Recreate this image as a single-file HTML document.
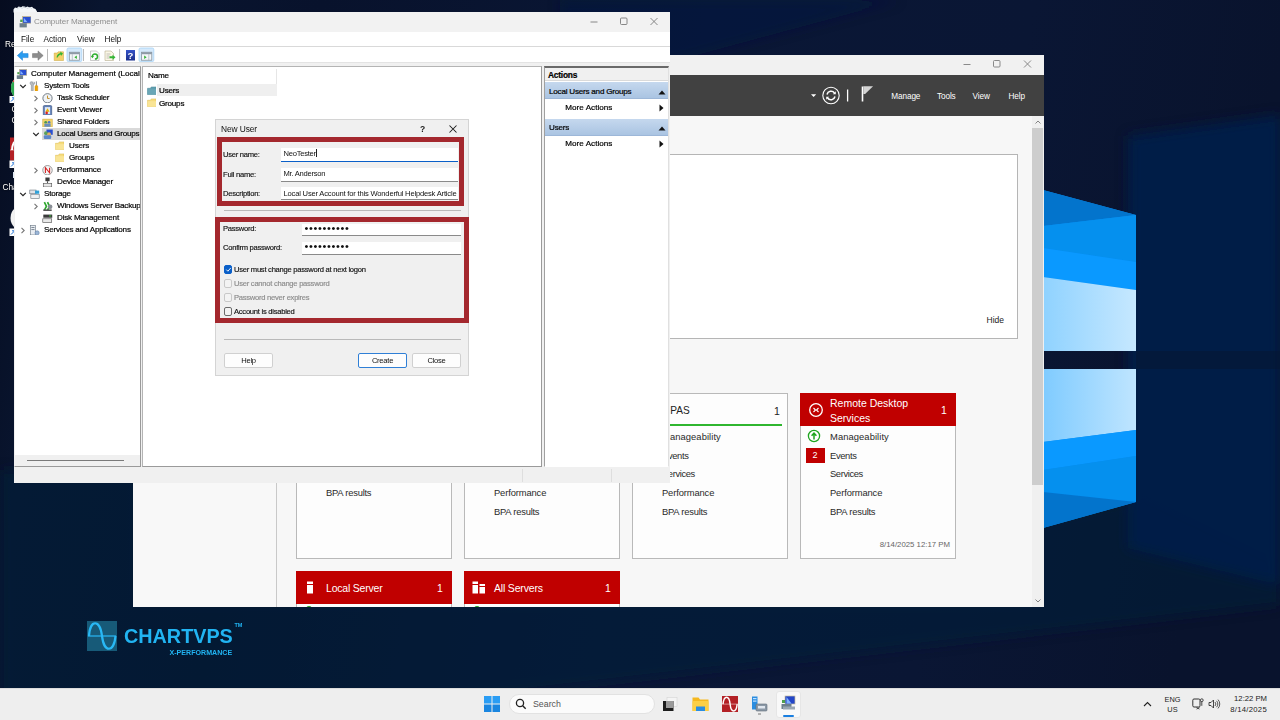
<!DOCTYPE html>
<html lang="en">
<head>
<meta charset="utf-8">
<title>Computer Management - New User</title>
<style>
*{box-sizing:border-box;margin:0;padding:0}
html,body{width:1280px;height:720px;overflow:hidden;background:#081229}
body{font-family:"Liberation Sans","DejaVu Sans",sans-serif;font-size:8.6px;color:#111;position:relative}
.abs{position:absolute}
#desk{position:absolute;left:0;top:0;width:1280px;height:720px;overflow:hidden}
.t{position:absolute;white-space:nowrap;line-height:12px}
/* ---------- Server Manager ---------- */
#sm{position:absolute;left:133px;top:55px;width:911px;height:552px;background:#f7f7f7;overflow:hidden}
#sm .title{position:absolute;left:0;top:0;width:911px;height:20px;background:#f1f1f1}
#sm .bar{position:absolute;left:0;top:20px;width:911px;height:41px;background:#414141}
#sm .bar .m{position:absolute;top:15.800px;color:#fff;font-size:8.200px;letter-spacing:-0.100px;line-height:12px}
#sm .nav{position:absolute;left:0;top:61px;width:144px;height:491px;background:#f8f8f8;border-right:1px solid #c9c9c9}
.tile{position:absolute;width:156px;background:#fdfdfd;border:1px solid #b9b9b9}
.tile .hd{position:absolute;left:-1px;top:-1px;width:156px;height:33px;background:#c00000;color:#fff}
.tile .row{position:absolute;left:34px;font-size:9.4px;line-height:12px;color:#2a2a2a;white-space:nowrap}
/* ---------- Computer Management ---------- */
#cm{position:absolute;left:14px;top:12px;width:656px;height:471px;background:#f0f0f0;overflow:hidden}
#cm .title{position:absolute;left:0;top:0;width:656px;height:20px;background:#f2f2f2}
#cm .menu{position:absolute;left:0;top:20px;width:656px;height:14px;background:#fff}
#cm .tool{position:absolute;left:0;top:35px;width:656px;height:15px;background:#fff}
.pane{position:absolute;background:#fff;border:1px solid #828790}
.tr{position:absolute;white-space:nowrap;line-height:12px;font-size:8.1px;letter-spacing:-0.22px;color:#000;-webkit-text-stroke:0.2px #000}
/* ---------- Dialog ---------- */
#dlg{position:absolute;left:215px;top:119px;width:254px;height:257px;background:#f0f0f0;border:1px solid #d4d4d4}
#dlg .lb{position:absolute;white-space:nowrap;font-size:7.6px;line-height:11px;color:#111;letter-spacing:-0.26px;-webkit-text-stroke:0.15px currentColor}
.fld{position:absolute;background:#fff;border-bottom:1px solid #8a8a8a;font-size:7.6px;line-height:12px;padding-left:2.500px;white-space:nowrap;letter-spacing:-0.26px;overflow:hidden}
.red{position:absolute;border:5px solid #a4282e}
.btn{position:absolute;height:14px;background:#fdfdfd;border:1px solid #d0d0d0;border-radius:2px;text-align:center;font-size:7.6px;line-height:12px;letter-spacing:-0.26px}
.cb{position:absolute;width:8.500px;height:8.500px;border:1px solid #6b6b6b;border-radius:2px;background:#f3f3f3}
/* ---------- Taskbar ---------- */
#tb{position:absolute;left:0;top:688px;width:1280px;height:32px;background:#eeeeee}
</style>
</head>
<body>
<div id="desk">
<svg class="abs" style="left:0;top:0" width="1280" height="720" viewBox="0 0 1280 720">
<defs>
<linearGradient id="bg" x1="0" y1="0" x2="1" y2="0.100">
<stop offset="0" stop-color="#060c1f"/><stop offset="0.080" stop-color="#09152f"/><stop offset="0.250" stop-color="#08122c"/><stop offset="0.550" stop-color="#0a1736"/><stop offset="0.800" stop-color="#0a1634"/><stop offset="1" stop-color="#09132d"/>
</linearGradient>
<linearGradient id="lt" x1="0" y1="0" x2="1" y2="0"><stop offset="0" stop-color="#8fd2ff"/><stop offset="1" stop-color="#c6e8ff"/></linearGradient>
<linearGradient id="lt2" x1="0" y1="0" x2="1" y2="0"><stop offset="0" stop-color="#7fcbff"/><stop offset="1" stop-color="#bfe5ff"/></linearGradient>
<filter id="bl" x="-10%" y="-10%" width="120%" height="120%"><feGaussianBlur stdDeviation="6"/></filter>
</defs>
<rect width="1280" height="720" fill="url(#bg)"/>
<g filter="url(#bl)">
<polygon points="560,0 900,0 670,62 560,62" fill="#0b1b40" opacity="0.500"/>
<polygon points="0,470 140,470 140,600 1030,600 1030,520 1136,500 1280,570 1280,605 450,700 0,700" fill="#081d3c" opacity="0.550"/>
<polygon points="1128,136 1280,115 1280,585 1128,548" fill="#06204a" opacity="0.950"/>
</g>
<rect x="1136" y="351" width="144" height="18" fill="#051734" opacity="0.600"/>
<!-- upper pane -->
<polygon points="1043,190 1136,215 1136,351 1043,351" fill="#0a8cf0"/>
<polygon points="1043,190 1136,215 1043,226" fill="#0374cc"/>
<polygon points="1043,226 1136,215 1136,262 1043,248" fill="#0590ee"/>
<polygon points="1043,248 1136,262 1136,290 1043,277" fill="#0a99ff"/>
<polygon points="1043,277 1136,290 1136,351 1043,351" fill="url(#lt)"/>
<!-- lower pane -->
<polygon points="1043,369 1136,369 1136,502 1043,528" fill="#0a8cf0"/>
<polygon points="1043,369 1136,369 1136,430 1043,442" fill="url(#lt2)"/>
<polygon points="1043,442 1136,430 1136,456 1043,470" fill="#0a99ff"/>
<polygon points="1043,470 1136,456 1136,502 1043,492" fill="#0590ee"/>
<polygon points="1043,492 1136,502 1043,528" fill="#0374cc"/>
</svg>

<svg class="abs" style="left:0;top:0" width="60" height="250" viewBox="0 0 60 250">
 <path d="M13.500 12.500v-3l1.500-2 2 0.500 1.500-1.500 2.500 0.800 2-1.300 2 1.500 2.500-1 2 1 2.500-0.800 1.500 1.600 2 0.700 1.500 2.500v2z" fill="#f4f6f8"/>
 <path d="M17 9l3-2 2 1.500 3-2 2 2 3-1.200 2 1.500" fill="none" stroke="#c9d2da" stroke-width="0.700"/>
 <!-- chrome -->
 <circle cx="24" cy="88" r="13" fill="#e8eaed"/>
 <path d="M24 88L12.700 81.500A13 13 0 0 0 17.500 99.300z" fill="#2da94f"/>
 <path d="M24 88L12.700 81.500A13 13 0 0 1 24 75z" fill="#e33b2e"/>
 <rect x="9.500" y="96" width="7" height="7" fill="#fff"/><path d="M11 101.500l3.500-3.500M12 97.800h2.700v2.700" stroke="#1a6fd6" stroke-width="1" fill="none"/>
 <!-- chart app -->
 <rect x="10" y="137.500" width="24" height="23" fill="#b32025"/>
 <path d="M10 150h24" stroke="#e9b9ba" stroke-width="0.800"/>
 <path d="M12 150C13 138 20 138 22 150" fill="none" stroke="#fff" stroke-width="2"/>
 <rect x="9.500" y="160.500" width="7" height="7.500" fill="#fff"/><path d="M11 166.500l3.500-3.500M12 162.800h2.700v2.700" stroke="#1a6fd6" stroke-width="1" fill="none"/>
 <!-- white round app -->
 <circle cx="24" cy="218" r="13.500" fill="#f2f2f2"/>
 <rect x="9.500" y="228.500" width="7" height="7.500" fill="#fff"/><path d="M11 234.500l3.500-3.500M12 230.800h2.700v2.700" stroke="#1a6fd6" stroke-width="1" fill="none"/>
</svg>
<span class="t" style="left:5px;top:37.500px;font-size:8.300px;color:#fff;text-shadow:0 0 2px #000">Recycle Bin</span>
<span class="t" style="left:11.500px;top:103px;font-size:8.300px;color:#fff;text-shadow:0 0 2px #000">Google</span>
<span class="t" style="left:11.500px;top:114px;font-size:8.300px;color:#fff;text-shadow:0 0 2px #000">Chrome</span>
<div class="abs" style="left:12.500px;top:172px;width:1.500px;height:5.500px;background:#dfe9f5"></div>
<span class="t" style="left:2.500px;top:180.500px;font-size:8.300px;color:#fff;text-shadow:0 0 2px #000">ChartVPS</span>


<div id="sm">
 <div class="title">
  <svg class="abs" style="left:830px;top:3px" width="72" height="12" viewBox="0 0 72 12"><g stroke="#8a8a8a" stroke-width="1" fill="none"><path d="M0.5 6.5h7"/><rect x="30.5" y="2.5" width="6.5" height="6.5" rx="1"/><path d="M61 2.5l7 7M68 2.5l-7 7"/></g></svg>
 </div>
 <div class="bar">
  <svg class="abs" style="left:676px;top:8px" width="80" height="26" viewBox="0 0 80 26">
   <path d="M2 11.300h5.200l-2.600 2.800z" fill="#fff"/>
   <circle cx="22" cy="12.5" r="8.2" fill="none" stroke="#fff" stroke-width="1.1"/>
   <path d="M18 11.5a4.2 4.2 0 0 1 7.5-1.5M26 13.500a4.200 4.200 0 0 1 -7.5 1.500" fill="none" stroke="#fff" stroke-width="1.5"/>
   <path d="M26.800 8.300v3h-3zM17.200 16.700v-3h3z" fill="#fff"/>
   <path d="M38.600 6.500v12" stroke="#fff" stroke-width="1.300"/>
   <path d="M53.500 3.500v15" stroke="#fff" stroke-width="1.600"/>
   <path d="M54.300 3.300h9.800l-8 7.800h-1.800z" fill="#d4d4d4"/>
  </svg>
  <span class="m" style="left:758.300px">Manage</span>
  <span class="m" style="left:804px">Tools</span>
  <span class="m" style="left:839.500px">View</span>
  <span class="m" style="left:875.400px">Help</span>
 </div>
 <div class="nav"></div>
 <!-- welcome panel -->
 <div class="abs" style="left:163px;top:99px;width:722px;height:185px;background:#fff;border:1px solid #b5b5b5"></div>
 <span class="t" style="left:853.500px;top:259px;font-size:8.500px;color:#222">Hide</span>
 <!-- scrollbar -->
 <div class="abs" style="left:899px;top:61px;width:12px;height:491px;background:#f0f0f0"></div>
 <div class="abs" style="left:899px;top:73px;width:10.500px;height:357px;background:#cdcdcd"></div>
 <svg class="abs" style="left:902px;top:65px" width="6" height="4" viewBox="0 0 6 4"><path d="M0.500 3.500l2.500-2.500 2.500 2.500" fill="none" stroke="#777" stroke-width="0.900"/></svg>
 <svg class="abs" style="left:902px;top:544px" width="6" height="4" viewBox="0 0 6 4"><path d="M0.500 0.500l2.500 2.500 2.500-2.500" fill="none" stroke="#777" stroke-width="0.900"/></svg>
 <!-- tiles row 1 -->
 <div class="tile" style="left:163px;top:338px;height:166px">
  <span class="row" style="left:29px;top:92.6px;letter-spacing:-0.22px">BPA results</span>
 </div>
 <div class="tile" style="left:331px;top:338px;height:166px">
  <span class="row" style="left:29px;top:92.6px;letter-spacing:-0.13px">Performance</span>
  <span class="row" style="left:29px;top:111.6px;letter-spacing:-0.22px">BPA results</span>
 </div>
 <div class="tile" style="left:499px;top:338px;height:166px">
  <span class="abs" style="left:30px;top:10.500px;font-size:10.100px;line-height:12px;color:#222">NPAS</span>
  <span class="abs" style="left:141px;top:11px;font-size:10.500px;line-height:12px;color:#222">1</span>
  <div class="abs" style="left:10px;top:30px;width:139px;height:2px;background:#2fb62f"></div>
  <span class="row" style="left:29px;top:36.6px;letter-spacing:0.08px">Manageability</span>
  <span class="row" style="left:29px;top:55.6px;letter-spacing:-0.35px">Events</span>
  <span class="row" style="left:29px;top:73.6px;letter-spacing:-0.39px">Services</span>
  <span class="row" style="left:29px;top:92.6px;letter-spacing:-0.13px">Performance</span>
  <span class="row" style="left:29px;top:111.6px;letter-spacing:-0.22px">BPA results</span>
 </div>
 <div class="tile" style="left:667px;top:338px;height:166px">
  <div class="hd">
   <svg class="abs" style="left:8px;top:9px" width="16" height="16" viewBox="0 0 16 16"><circle cx="8" cy="8" r="6.300" fill="none" stroke="#fff" stroke-width="1.300"/><path d="M5.500 6l2 2-2 2M10.500 6l-2 2 2 2" fill="none" stroke="#fff" stroke-width="1.100"/></svg>
   <span class="abs" style="left:30px;top:3px;font-size:10.500px;line-height:14.500px;white-space:nowrap">Remote Desktop<br>Services</span>
   <span class="abs" style="left:141px;top:10px;font-size:10.500px;line-height:14px">1</span>
  </div>
  <svg class="abs" style="left:6px;top:35px" width="14" height="14" viewBox="0 0 14 14"><circle cx="7" cy="7" r="5.600" fill="#fff" stroke="#1ea51e" stroke-width="1.300"/><path d="M7 10.500v-5M4.600 6.800l2.400-2.600 2.400 2.600" fill="none" stroke="#1ea51e" stroke-width="1.500"/></svg>
  <span class="row" style="left:29px;top:36.6px;letter-spacing:0.08px">Manageability</span>
  <div class="abs" style="left:4.500px;top:53.500px;width:19px;height:15.500px;background:#c00000;color:#fff;font-size:9px;line-height:15.500px;text-align:center">2</div>
  <span class="row" style="left:29px;top:55.6px;letter-spacing:-0.35px">Events</span>
  <span class="row" style="left:29px;top:73.6px;letter-spacing:-0.39px">Services</span>
  <span class="row" style="left:29px;top:92.6px;letter-spacing:-0.13px">Performance</span>
  <span class="row" style="left:29px;top:111.6px;letter-spacing:-0.22px">BPA results</span>
  <span class="abs" style="right:5px;top:146px;font-size:7.800px;line-height:10px;color:#666;white-space:nowrap">8/14/2025 12:17 PM</span>
 </div>
 <!-- tiles row 2 -->
 <div class="tile" style="left:163px;top:515.700px;height:60px">
  <div class="hd" style="height:33px">
   <svg class="abs" style="left:10px;top:10px" width="8" height="13" viewBox="0 0 8 13"><rect x="1" y="0.500" width="6" height="2.500" fill="#fff"/><rect x="1" y="4" width="6" height="8.500" fill="#fff"/></svg>
   <span class="abs" style="left:30px;top:10px;font-size:10.500px;line-height:14px;letter-spacing:-0.200px;white-space:nowrap">Local Server</span>
   <span class="abs" style="left:141px;top:10px;font-size:10.500px;line-height:14px">1</span>
  </div>
  <div class="abs" style="left:9px;top:34.300px;width:6px;height:6px;border-radius:3px;background:#1ea51e"></div>
 </div>
 <div class="tile" style="left:331px;top:515.700px;height:60px">
  <div class="hd" style="height:33px">
   <svg class="abs" style="left:8px;top:10px" width="14" height="13" viewBox="0 0 14 13"><rect x="0.500" y="0.500" width="5.500" height="2.500" fill="#fff"/><rect x="0.500" y="4" width="5.500" height="8.500" fill="#fff"/><rect x="7.500" y="3" width="5.500" height="2" fill="#fff"/><rect x="7.500" y="6" width="5.500" height="6.500" fill="#fff"/></svg>
   <span class="abs" style="left:30px;top:10px;font-size:10.500px;line-height:14px;letter-spacing:-0.180px;white-space:nowrap">All Servers</span>
   <span class="abs" style="left:141px;top:10px;font-size:10.500px;line-height:14px">1</span>
  </div>
  <div class="abs" style="left:9px;top:34.300px;width:6px;height:6px;border-radius:3px;background:#1ea51e"></div>
 </div>
</div>

<div id="cm">
 <div class="title">
  <svg class="abs" style="left:5px;top:4px" width="12" height="12" viewBox="0 0 10 10"><rect x="3" y="0.500" width="7" height="5.500" fill="#2a4fd0" stroke="#c8b98a" stroke-width="0.600"/><path d="M4 1.500l3 3.500h-3z" fill="#7fb0ff"/><rect x="0.500" y="6" width="6" height="3.500" fill="#6d7f8c"/><rect x="1" y="3" width="2" height="2" fill="#4ea04e"/></svg>
  <span class="t" style="left:20px;top:4px;font-size:8.100px;letter-spacing:-0.100px;color:#8f8f8f">Computer Management</span>
  <svg class="abs" style="left:576px;top:5px" width="72" height="10" viewBox="0 0 72 10"><g stroke="#7a7a7a" stroke-width="0.900" fill="none"><path d="M0.500 5h7"/><rect x="30.500" y="1" width="6.500" height="6.500" rx="1"/><path d="M60.500 1l7 7M67.500 1l-7 7"/></g></svg>
 </div>
 <div class="menu">
  <span class="t" style="left:7px;top:2px;font-size:8.200px">File</span>
  <span class="t" style="left:29.500px;top:2px;font-size:8.200px">Action</span>
  <span class="t" style="left:63px;top:2px;font-size:8.200px">View</span>
  <span class="t" style="left:90.500px;top:2px;font-size:8.200px">Help</span>
 </div>
 <div class="abs" style="left:0;top:34px;width:656px;height:1px;background:#d9d9d9"></div>
 <div class="tool">
  <svg class="abs" style="left:0;top:0" width="160" height="15" viewBox="14 47 160 15">
   <defs><linearGradient id="hb" x1="0" y1="0" x2="0" y2="1"><stop offset="0" stop-color="#3553c8"/><stop offset="1" stop-color="#1a2f8c"/></linearGradient></defs>
   <path d="M17.300 55.600l5.200-4.700v2.700h5.600v4h-5.600v2.700z" fill="#2a9cf0" stroke="#1f7fd0" stroke-width="0.500"/>
   <path d="M43.200 55.600l-5.200-4.700v2.700h-5.500v4h5.500v2.700z" fill="#8d8d8d" stroke="#707070" stroke-width="0.500"/>
   <path d="M47.500 49v12" stroke="#a8a8a8" stroke-width="0.800"/>
   <path d="M54.200 53h3l1-1.200h5.300v8.700h-9.300z" fill="#f3d06a" stroke="#c9a43c" stroke-width="0.500"/>
   <path d="M56.500 57.500c0.500-3 2-4 4-4.500l-0.500-1.500 3 2-2 2.500-0.300-1.500c-1.500 0.500-2.500 1.500-3 3z" fill="#35b535"/>
   <rect x="67" y="48" width="14.800" height="13.600" rx="1.500" fill="#d5e9fb" stroke="#9fd0f7" stroke-width="0.700"/>
   <rect x="69.300" y="52.200" width="10.200" height="8" fill="#f4f6f8" stroke="#7d8a96" stroke-width="0.700"/>
   <rect x="69.300" y="52.200" width="10.200" height="2" fill="#8e9aa6"/>
   <path d="M72.300 54.200v6" stroke="#9aa5b0" stroke-width="0.600"/>
   <path d="M76.800 55.500v3.600l-2.400-1.800z" fill="#2fae2f"/>
   <path d="M83.500 49v12" stroke="#a8a8a8" stroke-width="0.800"/>
   <path d="M90.500 51h6l2.500 2.500v7h-8.500z" fill="#fbfbfb" stroke="#a9a9a9" stroke-width="0.600"/>
   <path d="M92.300 56.500a2.600 2.600 0 1 1 2.600 2.600" fill="none" stroke="#2fae2f" stroke-width="1.500"/>
   <path d="M90.800 56l1.600 2.200 1.600-2.200z" fill="#2fae2f"/>
   <path d="M105 51h6l2.500 2.500v7h-8.500z" fill="#fbf7e6" stroke="#b5ac8d" stroke-width="0.600"/>
   <path d="M106.500 54h4M106.500 56h3M106.500 58h3" stroke="#9c9c9c" stroke-width="0.600"/>
   <path d="M109.500 56.300h3v-1.600l3 2.600-3 2.600v-1.600h-3z" fill="#35b535"/>
   <path d="M119.600 49v12" stroke="#a8a8a8" stroke-width="0.800"/>
   <rect x="126" y="50" width="9" height="10.500" fill="url(#hb)"/>
   <text x="130.500" y="58.700" font-family="Liberation Sans, sans-serif" font-size="9.500" font-weight="bold" fill="#fff" text-anchor="middle">?</text>
   <rect x="139" y="48" width="14.800" height="13.600" rx="1.500" fill="#d5e9fb" stroke="#9fd0f7" stroke-width="0.700"/>
   <rect x="141.600" y="52.200" width="10.200" height="8" fill="#f4f6f8" stroke="#7d8a96" stroke-width="0.700"/>
   <rect x="141.600" y="52.200" width="10.200" height="2" fill="#8e9aa6"/>
   <path d="M148.800 54.200v6" stroke="#9aa5b0" stroke-width="0.600"/>
   <path d="M144.200 55.500v3.600l2.400-1.800z" fill="#2fae2f"/>
  </svg>

 </div>
 <div class="abs" style="left:0;top:50px;width:656px;height:1px;background:#e3e3e3"></div>
 <!-- tree pane -->
 <div class="pane" style="left:0px;top:54px;width:127px;height:401px;border-color:#b4b4b4 #9a9a9a #9a9a9a #f0f0f0"></div>
 <div id="tree" class="abs" style="left:0;top:55px;width:126px;height:399px;overflow:hidden"><div class="abs" style="left:0;top:-55px">
  <svg class="abs" style="left:2.3px;top:56.9px" width="11" height="10.500" viewBox="0 0 10 10"><rect x="3" y="0.500" width="7" height="5.500" fill="#2a4fd0" stroke="#c8b98a" stroke-width="0.600"/><path d="M4 1.500l3 3.500h-3z" fill="#7fb0ff"/><rect x="0.500" y="6" width="6" height="3.500" fill="#6d7f8c"/><rect x="1" y="3" width="2" height="2" fill="#4ea04e"/></svg>
  <span class="tr" style="left:17.0px;top:55.9px;letter-spacing:-0.020px">Computer Management (Local</span>
  <svg class="abs" style="left:4.5px;top:71.9px" width="8" height="6" viewBox="0 0 8 6"><path d="M1.200 0.900l2.800 2.800 2.800-2.800" fill="none" stroke="#222" stroke-width="1.200"/></svg>
  <svg class="abs" style="left:15.3px;top:68.9px" width="11" height="10.500" viewBox="0 0 10 10"><path d="M1.300 0.800c-1 1.200-0.300 2.700 0.700 3v5.200c0 1 1.800 1 1.800 0v-5.200c1-0.300 1.700-1.800 0.700-3v1.700h-1.400v-1.700z" fill="#b9bec4" stroke="#7d848c" stroke-width="0.500"/><rect x="6.300" y="0.300" width="1" height="4.200" fill="#8a8f96"/><rect x="5.500" y="4.300" width="2.600" height="5.500" rx="1" fill="#f0a400" stroke="#c98200" stroke-width="0.400"/></svg>
  <span class="tr" style="left:30.0px;top:67.9px">System Tools</span>
  <svg class="abs" style="left:18.5px;top:82.9px" width="6" height="7" viewBox="0 0 6 7"><path d="M1.500 0.800l2.700 2.700-2.700 2.700" fill="none" stroke="#777" stroke-width="1.100"/></svg>
  <svg class="abs" style="left:28.3px;top:80.9px" width="11" height="10.500" viewBox="0 0 10 10"><circle cx="5" cy="5" r="4.400" fill="#eef2f6" stroke="#6c7680" stroke-width="0.900"/><path d="M5 2.500v2.700h2" stroke="#c08a20" stroke-width="0.900" fill="none"/></svg>
  <span class="tr" style="left:43.0px;top:79.9px">Task Scheduler</span>
  <svg class="abs" style="left:18.5px;top:94.9px" width="6" height="7" viewBox="0 0 6 7"><path d="M1.500 0.800l2.700 2.700-2.700 2.700" fill="none" stroke="#777" stroke-width="1.100"/></svg>
  <svg class="abs" style="left:28.3px;top:92.9px" width="11" height="10.500" viewBox="0 0 10 10"><rect x="1" y="0.500" width="8" height="9.500" rx="1" fill="#5f7fb8" stroke="#3d557f" stroke-width="0.600"/><rect x="2.500" y="2" width="5" height="6.500" fill="#dfe8f5"/><path d="M5 3l2 3.500h-4z" fill="#e8b400"/><circle cx="4.200" cy="7.500" r="1.200" fill="#d22"/></svg>
  <span class="tr" style="left:43.0px;top:91.9px">Event Viewer</span>
  <svg class="abs" style="left:18.5px;top:106.9px" width="6" height="7" viewBox="0 0 6 7"><path d="M1.500 0.800l2.700 2.700-2.700 2.700" fill="none" stroke="#777" stroke-width="1.100"/></svg>
  <svg class="abs" style="left:28.3px;top:104.9px" width="11" height="10.500" viewBox="0 0 10 10"><rect x="0.500" y="2" width="9" height="7.500" fill="#f2d36b" stroke="#c9a53a" stroke-width="0.500"/><circle cx="3.300" cy="5" r="1.300" fill="#4d9a4d"/><circle cx="6.500" cy="5" r="1.300" fill="#4d77c9"/><rect x="2" y="6.300" width="6" height="3" fill="#6a8fbf"/></svg>
  <span class="tr" style="left:43.0px;top:103.9px">Shared Folders</span>
  <div class="abs" style="left:28.0px;top:115.9px;width:97.5px;height:12px;background:#d9d9d9"></div>
  <svg class="abs" style="left:17.5px;top:119.9px" width="8" height="6" viewBox="0 0 8 6"><path d="M1.200 0.900l2.800 2.800 2.800-2.800" fill="none" stroke="#222" stroke-width="1.200"/></svg>
  <svg class="abs" style="left:28.3px;top:116.9px" width="11" height="10.500" viewBox="0 0 10 10"><rect x="4" y="0.500" width="6" height="5" fill="#2a4fd0"/><circle cx="3.500" cy="4" r="1.800" fill="#5aa05a"/><circle cx="6.500" cy="5" r="1.800" fill="#e0b060"/><rect x="1.500" y="6" width="7" height="3.500" rx="1" fill="#5d86c9"/></svg>
  <span class="tr" style="left:43.0px;top:115.9px">Local Users and Groups</span>
  <svg class="abs" style="left:40.8px;top:129.4px" width="9.500" height="9" viewBox="0 0 10 10" preserveAspectRatio="none"><path d="M0.500 2.500h3l1-1.500h5v8.500h-9z" fill="#f6dc7c" stroke="#d9b84e" stroke-width="0.500"/><rect x="0.500" y="3.500" width="9" height="6" fill="#f9e596"/></svg>
  <span class="tr" style="left:55.0px;top:127.9px">Users</span>
  <svg class="abs" style="left:40.8px;top:141.4px" width="9.500" height="9" viewBox="0 0 10 10" preserveAspectRatio="none"><path d="M0.500 2.500h3l1-1.500h5v8.500h-9z" fill="#f6dc7c" stroke="#d9b84e" stroke-width="0.500"/><rect x="0.500" y="3.500" width="9" height="6" fill="#f9e596"/></svg>
  <span class="tr" style="left:55.0px;top:139.9px">Groups</span>
  <svg class="abs" style="left:18.5px;top:154.9px" width="6" height="7" viewBox="0 0 6 7"><path d="M1.500 0.800l2.700 2.700-2.700 2.700" fill="none" stroke="#777" stroke-width="1.100"/></svg>
  <svg class="abs" style="left:28.3px;top:152.9px" width="11" height="10.500" viewBox="0 0 10 10"><circle cx="5" cy="5" r="4.500" fill="#f4f4f4" stroke="#8a8a8a" stroke-width="0.800"/><path d="M3 7.500v-5l4 5v-5" fill="none" stroke="#d21f1f" stroke-width="1"/></svg>
  <span class="tr" style="left:43.0px;top:151.9px">Performance</span>
  <svg class="abs" style="left:28.3px;top:164.9px" width="11" height="10.500" viewBox="0 0 10 10"><rect x="3" y="0.500" width="4" height="3.500" fill="#3a3a3a"/><rect x="4.500" y="4" width="1" height="2" fill="#555"/><rect x="1" y="6" width="8" height="3.500" fill="#e6e6e6" stroke="#555" stroke-width="0.600"/></svg>
  <span class="tr" style="left:43.0px;top:163.9px">Device Manager</span>
  <svg class="abs" style="left:4.5px;top:179.9px" width="8" height="6" viewBox="0 0 8 6"><path d="M1.200 0.900l2.800 2.800 2.800-2.800" fill="none" stroke="#222" stroke-width="1.200"/></svg>
  <svg class="abs" style="left:15.3px;top:176.9px" width="11" height="10.500" viewBox="0 0 10 10"><rect x="0.500" y="1" width="6" height="3.500" fill="#dfe3e8" stroke="#6e7781" stroke-width="0.600"/><rect x="1.500" y="5" width="8" height="4" fill="#eef0f2" stroke="#6e7781" stroke-width="0.600"/><rect x="5.500" y="1.500" width="4" height="3" fill="#2ea1d9"/></svg>
  <span class="tr" style="left:30.0px;top:175.9px">Storage</span>
  <svg class="abs" style="left:18.5px;top:190.9px" width="6" height="7" viewBox="0 0 6 7"><path d="M1.500 0.800l2.700 2.700-2.700 2.700" fill="none" stroke="#777" stroke-width="1.100"/></svg>
  <svg class="abs" style="left:28.3px;top:188.9px" width="11" height="10.500" viewBox="0 0 10 10"><path d="M2 1l2 4-2 4M5 1l2 4-2 4" stroke="#2fa82f" stroke-width="1.600" fill="none"/><circle cx="7.500" cy="5.500" r="2.200" fill="#8a8f96"/><rect x="1" y="8" width="8" height="1.500" fill="#555"/></svg>
  <span class="tr" style="left:43.0px;top:187.9px">Windows Server Backup</span>
  <svg class="abs" style="left:28.3px;top:200.9px" width="11" height="10.500" viewBox="0 0 10 10"><rect x="1" y="1.500" width="8.500" height="3" fill="#3b3b3b"/><rect x="0.500" y="5.500" width="8.500" height="3.500" fill="#e9e9e9" stroke="#555" stroke-width="0.600"/><rect x="6.500" y="2.300" width="2" height="1" fill="#3fbf3f"/></svg>
  <span class="tr" style="left:43.0px;top:199.9px">Disk Management</span>
  <svg class="abs" style="left:5.5px;top:214.9px" width="6" height="7" viewBox="0 0 6 7"><path d="M1.500 0.800l2.700 2.700-2.700 2.700" fill="none" stroke="#777" stroke-width="1.100"/></svg>
  <svg class="abs" style="left:15.3px;top:212.9px" width="11" height="10.500" viewBox="0 0 10 10"><rect x="1" y="0.500" width="5" height="9" fill="#e9edf2" stroke="#6b7885" stroke-width="0.600"/><rect x="2" y="2" width="3" height="0.800" fill="#6b7885"/><rect x="2" y="4" width="3" height="0.800" fill="#6b7885"/><circle cx="7.500" cy="7.500" r="2" fill="#9cb6d6" stroke="#5a7aa3" stroke-width="0.500"/></svg>
  <span class="tr" style="left:30.0px;top:211.9px">Services and Applications</span>
 </div></div>
 <div class="abs" style="left:1px;top:443px;width:125px;height:11px;background:#f0f0f0"></div>
 <div class="abs" style="left:13px;top:448px;width:97px;height:1px;background:#7a7a7a"></div>
 <div class="abs" style="left:508px;top:457px;width:1px;height:13px;background:#dedede"></div>
 <div class="abs" style="left:597px;top:457px;width:1px;height:13px;background:#dedede"></div>
 <!-- center pane -->
 <div class="pane" style="left:128px;top:54px;width:400px;height:401px;border-color:#b4b4b4 #9a9a9a #9a9a9a #b4b4b4"></div>
 <span class="tr" style="left:134px;top:58px">Name</span>
 <div class="abs" style="left:262px;top:57px;width:1px;height:15px;background:#e6e6e6"></div>
 <div class="abs" style="left:143px;top:72px;width:120px;height:12px;background:#efefef"></div>
 <svg class="abs" style="left:132.800px;top:73.500px" width="9.500" height="9" viewBox="0 0 10 10" preserveAspectRatio="none"><path d="M0.500 2.500h3l1-1.500h5v8.500h-9z" fill="#5f9fb0" stroke="#4d8796" stroke-width="0.500"/><rect x="0.500" y="3.500" width="9" height="6" fill="#6aa6b6"/></svg>
 <span class="tr" style="left:145px;top:73px">Users</span>
 <svg class="abs" style="left:132.800px;top:86px" width="9.500" height="9" viewBox="0 0 10 10" preserveAspectRatio="none"><path d="M0.500 2.500h3l1-1.500h5v8.500h-9z" fill="#f6dc7c" stroke="#d9b84e" stroke-width="0.500"/><rect x="0.500" y="3.500" width="9" height="6" fill="#f9e596"/></svg>
 <span class="tr" style="left:145px;top:85.500px">Groups</span>
 <!-- actions pane -->
 <div class="abs" style="left:530px;top:54px;width:125px;height:401px;background:#fff;border:1px solid #a0a0a0;border-top:2px solid #6a6a6a;border-right-color:#e0e0e0;border-bottom-color:#fff"></div>
 <div class="abs" style="left:531px;top:56px;width:123px;height:13px;background:#f0f0f0;border-bottom:1px solid #dadada"></div>
 <span class="tr" style="left:534px;top:57px;font-weight:bold;font-size:8.400px">Actions</span>
 <div class="abs" style="left:531px;top:70px;width:123px;height:17px;background:linear-gradient(#c5d8ee,#aac4e2);border-bottom:1px solid #9db7d8"></div>
 <span class="tr" style="left:535px;top:73.700px">Local Users and Groups</span>
 <svg class="abs" style="left:643.500px;top:77.500px" width="8" height="5" viewBox="0 0 8 5"><path d="M0.500 4.500l3.500-4 3.500 4z" fill="#111"/></svg>
 <span class="tr" style="left:551.300px;top:89.700px;letter-spacing:0.030px">More Actions</span>
 <svg class="abs" style="left:645px;top:91.700px" width="5" height="8" viewBox="0 0 5 8"><path d="M0.500 0.500l4 3.500-4 3.500z" fill="#111"/></svg>
 <div class="abs" style="left:531px;top:107px;width:123px;height:16.500px;background:linear-gradient(#c5d8ee,#aac4e2);border-bottom:1px solid #9db7d8"></div>
 <span class="tr" style="left:535px;top:110.200px">Users</span>
 <svg class="abs" style="left:643.500px;top:113.700px" width="8" height="5" viewBox="0 0 8 5"><path d="M0.500 4.500l3.500-4 3.500 4z" fill="#111"/></svg>
 <span class="tr" style="left:551.300px;top:126.200px;letter-spacing:0.030px">More Actions</span>
 <svg class="abs" style="left:645px;top:128.200px" width="5" height="8" viewBox="0 0 5 8"><path d="M0.500 0.500l4 3.500-4 3.500z" fill="#111"/></svg>
</div>

<div id="dlg">
 <span class="t" style="left:5px;top:3px;font-size:8.400px;letter-spacing:-0.100px;color:#111">New User</span>
 <span class="t" style="left:204px;top:2.500px;font-size:8.500px;font-weight:bold;color:#222">?</span>
 <svg class="abs" style="left:233px;top:5px" width="8" height="8" viewBox="0 0 8 8"><path d="M0.500 0.500l7 7M7.500 0.500l-7 7" stroke="#1a1a1a" stroke-width="1.050" fill="none"/></svg>
 <!-- section 1 -->
 <span class="lb" style="left:7px;top:28.500px">User name:</span>
 <div class="fld" style="left:65px;top:28px;width:177px;height:14px;border-bottom:1.500px solid #0a5fc8">NeoTester<span style="display:inline-block;width:1px;height:8px;background:#222;vertical-align:-1px"></span></div>
 <span class="lb" style="left:7px;top:48.500px">Full name:</span>
 <div class="fld" style="left:65px;top:48px;width:177px;height:14px">Mr. Anderson</div>
 <span class="lb" style="left:7px;top:68px">Description:</span>
 <div class="fld" style="left:65px;top:67.300px;width:177px;height:13.200px;line-height:13px;letter-spacing:-0.195px">Local User Account for this Wonderful Helpdesk Article</div>
 <div class="red" style="left:1.300px;top:17.300px;width:246.700px;height:69px;border-width:5.400px"></div>
 <div class="abs" style="left:8px;top:90px;width:237px;height:1px;background:#b9b9b9"></div>
 <!-- section 2 -->
 <span class="lb" style="left:7px;top:103px">Password:</span>
 <div class="fld" style="left:86px;top:104px;width:159px;height:12px;line-height:8.500px;font-size:11px;letter-spacing:0.650px">••••••••••</div>
 <span class="lb" style="left:7px;top:122px">Confirm password:</span>
 <div class="fld" style="left:86px;top:122px;width:159px;height:13px;line-height:9.500px;font-size:11px;letter-spacing:0.650px">••••••••••</div>
 <div class="cb" style="left:7.500px;top:145px;background:#0a5fc8;border-color:#0a5fc8"><svg class="abs" style="left:0;top:0" width="7" height="7" viewBox="0 0 7 7"><path d="M1.300 3.600l1.600 1.600 2.900-3.300" fill="none" stroke="#fff" stroke-width="0.900"/></svg></div>
 <span class="lb" style="left:18px;top:144px">User must change password at next logon</span>
 <div class="cb" style="left:7.500px;top:159px;border-color:#c8c8c8"></div>
 <span class="lb" style="left:18px;top:158px;color:#8b8b8b">User cannot change password</span>
 <div class="cb" style="left:7.500px;top:173px;border-color:#c8c8c8"></div>
 <span class="lb" style="left:18px;top:172px;color:#8b8b8b">Password never expires</span>
 <div class="cb" style="left:7.500px;top:187px"></div>
 <span class="lb" style="left:18px;top:186px">Account is disabled</span>
 <div class="red" style="left:-1px;top:97px;width:254px;height:106px"></div>
 <div class="abs" style="left:8px;top:219px;width:237px;height:1px;background:#b9b9b9"></div>
 <div class="btn" style="left:8px;top:233px;width:49px;height:14.500px;line-height:12.500px;padding-top:1px">Help</div>
 <div class="btn" style="left:142px;top:233px;width:49px;height:14.500px;line-height:12.500px;padding-top:1px;border-color:#2f7fd6">Create</div>
 <div class="btn" style="left:196px;top:233px;width:49px;height:14.500px;line-height:12.500px;padding-top:1px">Close</div>
</div>

<div class="abs" style="left:87px;top:621px;width:30px;height:30px;background:#175a78"></div>
<svg class="abs" style="left:87px;top:621px" width="30" height="30" viewBox="0 0 30 30"><path d="M1 15h28" stroke="#29b8f5" stroke-width="1.200"/><path d="M2 15C3 -2 13 -2 15 15S27 32 28.500 15" fill="none" stroke="#29b8f5" stroke-width="2.200"/></svg>
<span class="abs" style="left:124px;top:624px;font-size:19.800px;line-height:24px;font-weight:bold;color:#21b4f2;white-space:nowrap">CHARTVPS</span>
<span class="abs" style="left:234.500px;top:622px;font-size:5.500px;line-height:7px;font-weight:bold;color:#21b4f2">TM</span>
<span class="abs" style="left:169.500px;top:649px;font-size:7.100px;line-height:9px;font-weight:bold;color:#21b4f2;white-space:nowrap">X-PERFORMANCE</span>

<div id="tb">
 <div class="abs" style="left:0;top:0;width:1280px;height:1px;background:#dcdcdc"></div>
 <!-- start -->
 <svg class="abs" style="left:484px;top:8px" width="16" height="16" viewBox="0 0 16 16"><rect x="0" y="0" width="7.500" height="7.500" fill="#2a9df4"/><rect x="8.500" y="0" width="7.500" height="7.500" fill="#2a9df4"/><rect x="0" y="8.500" width="7.500" height="7.500" fill="#1a86e0"/><rect x="8.500" y="8.500" width="7.500" height="7.500" fill="#1a86e0"/></svg>
 <!-- search -->
 <div class="abs" style="left:509px;top:6px;width:146px;height:20px;border-radius:10px;background:#fbfbfb;border:1px solid #e2e2e2"></div>
 <svg class="abs" style="left:515px;top:10px" width="12" height="12" viewBox="0 0 12 12"><circle cx="5" cy="5" r="3.600" fill="none" stroke="#222" stroke-width="1.300"/><path d="M7.700 7.700l3 3" stroke="#222" stroke-width="1.400"/></svg>
 <span class="t" style="left:533px;top:10px;font-size:8.800px;color:#555">Search</span>
 <!-- task view -->
 <svg class="abs" style="left:662px;top:9px" width="16" height="15" viewBox="0 0 16 15"><rect x="5" y="0.500" width="10" height="9" fill="#f4f4f4" stroke="#d0d0d0" stroke-width="0.500"/><rect x="1" y="4" width="10.500" height="10" fill="#1c1c1c"/><rect x="4" y="4" width="7.500" height="7" fill="#9a9a9a"/></svg>
 <!-- explorer -->
 <svg class="abs" style="left:692px;top:8px" width="17" height="16" viewBox="0 0 17 16"><path d="M0.500 1.500h6l1.500 2h8.500v11.500h-16z" fill="#f5b81f"/><rect x="0.500" y="5" width="16" height="10" rx="1" fill="#fccf45"/><rect x="4" y="10.500" width="9" height="4.500" fill="#2a8de0"/></svg>
 <!-- chart app -->
 <svg class="abs" style="left:721.800px;top:7.800px" width="16.200" height="16.200" viewBox="0 0 16 16"><rect width="16" height="16" fill="#b32025"/><path d="M0 8h16" stroke="#e9b9ba" stroke-width="0.700"/><path d="M1 8C2 -1 7 -1 8 8S14 17 15 8" fill="none" stroke="#fff" stroke-width="1.400"/></svg>
 <!-- server manager -->
 <svg class="abs" style="left:751px;top:8px" width="17" height="19" viewBox="0 0 17 19"><rect x="1" y="0.500" width="5.500" height="13" fill="#2a8de0"/><rect x="2" y="2" width="3.500" height="1.200" fill="#bfe0ff"/><rect x="2" y="4.500" width="3.500" height="1.200" fill="#bfe0ff"/><rect x="5" y="8" width="11" height="7" rx="1" fill="#8c99a6" stroke="#5f6b78" stroke-width="0.600"/><rect x="7" y="10" width="7" height="2.500" fill="#dfe6ee"/><rect x="7" y="17.500" width="3" height="1" fill="#777"/></svg>
 <!-- computer management (active) -->
 <div class="abs" style="left:776px;top:3px;width:25px;height:27px;border-radius:3px;background:#f9f9f9;border:1px solid #e6e6e6"></div>
 <svg class="abs" style="left:780px;top:7px" width="17" height="17" viewBox="0 0 17 17"><rect x="5" y="1" width="10" height="8" fill="#2346c8" stroke="#c9c0a0" stroke-width="0.700"/><path d="M6.500 2l5 6.500h-5z" fill="#7fb0ff"/><rect x="1.500" y="9" width="10" height="5" fill="#6d7f8c"/><rect x="3" y="11.500" width="12" height="3" fill="#9aa7b3"/><rect x="2" y="5" width="3" height="3" fill="#4ea04e"/></svg>
 <div class="abs" style="left:783px;top:27px;width:11px;height:2px;border-radius:1px;background:#1a7fe0"></div>
 <!-- tray -->
 <svg class="abs" style="left:1143px;top:13px" width="9" height="6" viewBox="0 0 9 6"><path d="M1 5l3.500-3.500 3.500 3.500" fill="none" stroke="#222" stroke-width="1.100"/></svg>
 <span class="t" style="left:1158.500px;top:6.500px;width:28px;text-align:center;font-size:7.400px;line-height:10.900px;color:#222;white-space:normal">ENG US</span>
 <svg class="abs" style="left:1191px;top:9px" width="14" height="14" viewBox="0 0 14 14"><rect x="1.800" y="2" width="7.200" height="8" rx="1.200" fill="none" stroke="#333" stroke-width="1"/><path d="M5.500 10.500l3 1.600M8.500 10.500l-3 1.600" stroke="#333" stroke-width="0.800"/><circle cx="10.800" cy="3.200" r="1.400" fill="#eee" stroke="#333" stroke-width="0.900"/><path d="M10.800 4.600v4.200" stroke="#333" stroke-width="0.900"/></svg>
 <svg class="abs" style="left:1208px;top:10px" width="13" height="12" viewBox="0 0 13 12"><path d="M1 4.500h2l2.500-2.500v8l-2.500-2.500h-2z" fill="none" stroke="#333" stroke-width="0.900"/><path d="M7 4a3 3 0 0 1 0 4M8.500 2.800a4.600 4.600 0 0 1 0 6.400M10 1.600a6.400 6.400 0 0 1 0 8.800" fill="none" stroke="#333" stroke-width="0.800"/></svg>
 <span class="t" style="left:1217px;top:5.800px;width:50px;text-align:right;font-size:7.700px;line-height:10.500px;color:#222">12:22 PM</span>
 <span class="t" style="left:1217px;top:16.500px;width:50px;text-align:right;font-size:7.700px;letter-spacing:0.280px;line-height:10.500px;color:#222">8/14/2025</span>
</div>

</div>
</body>
</html>
